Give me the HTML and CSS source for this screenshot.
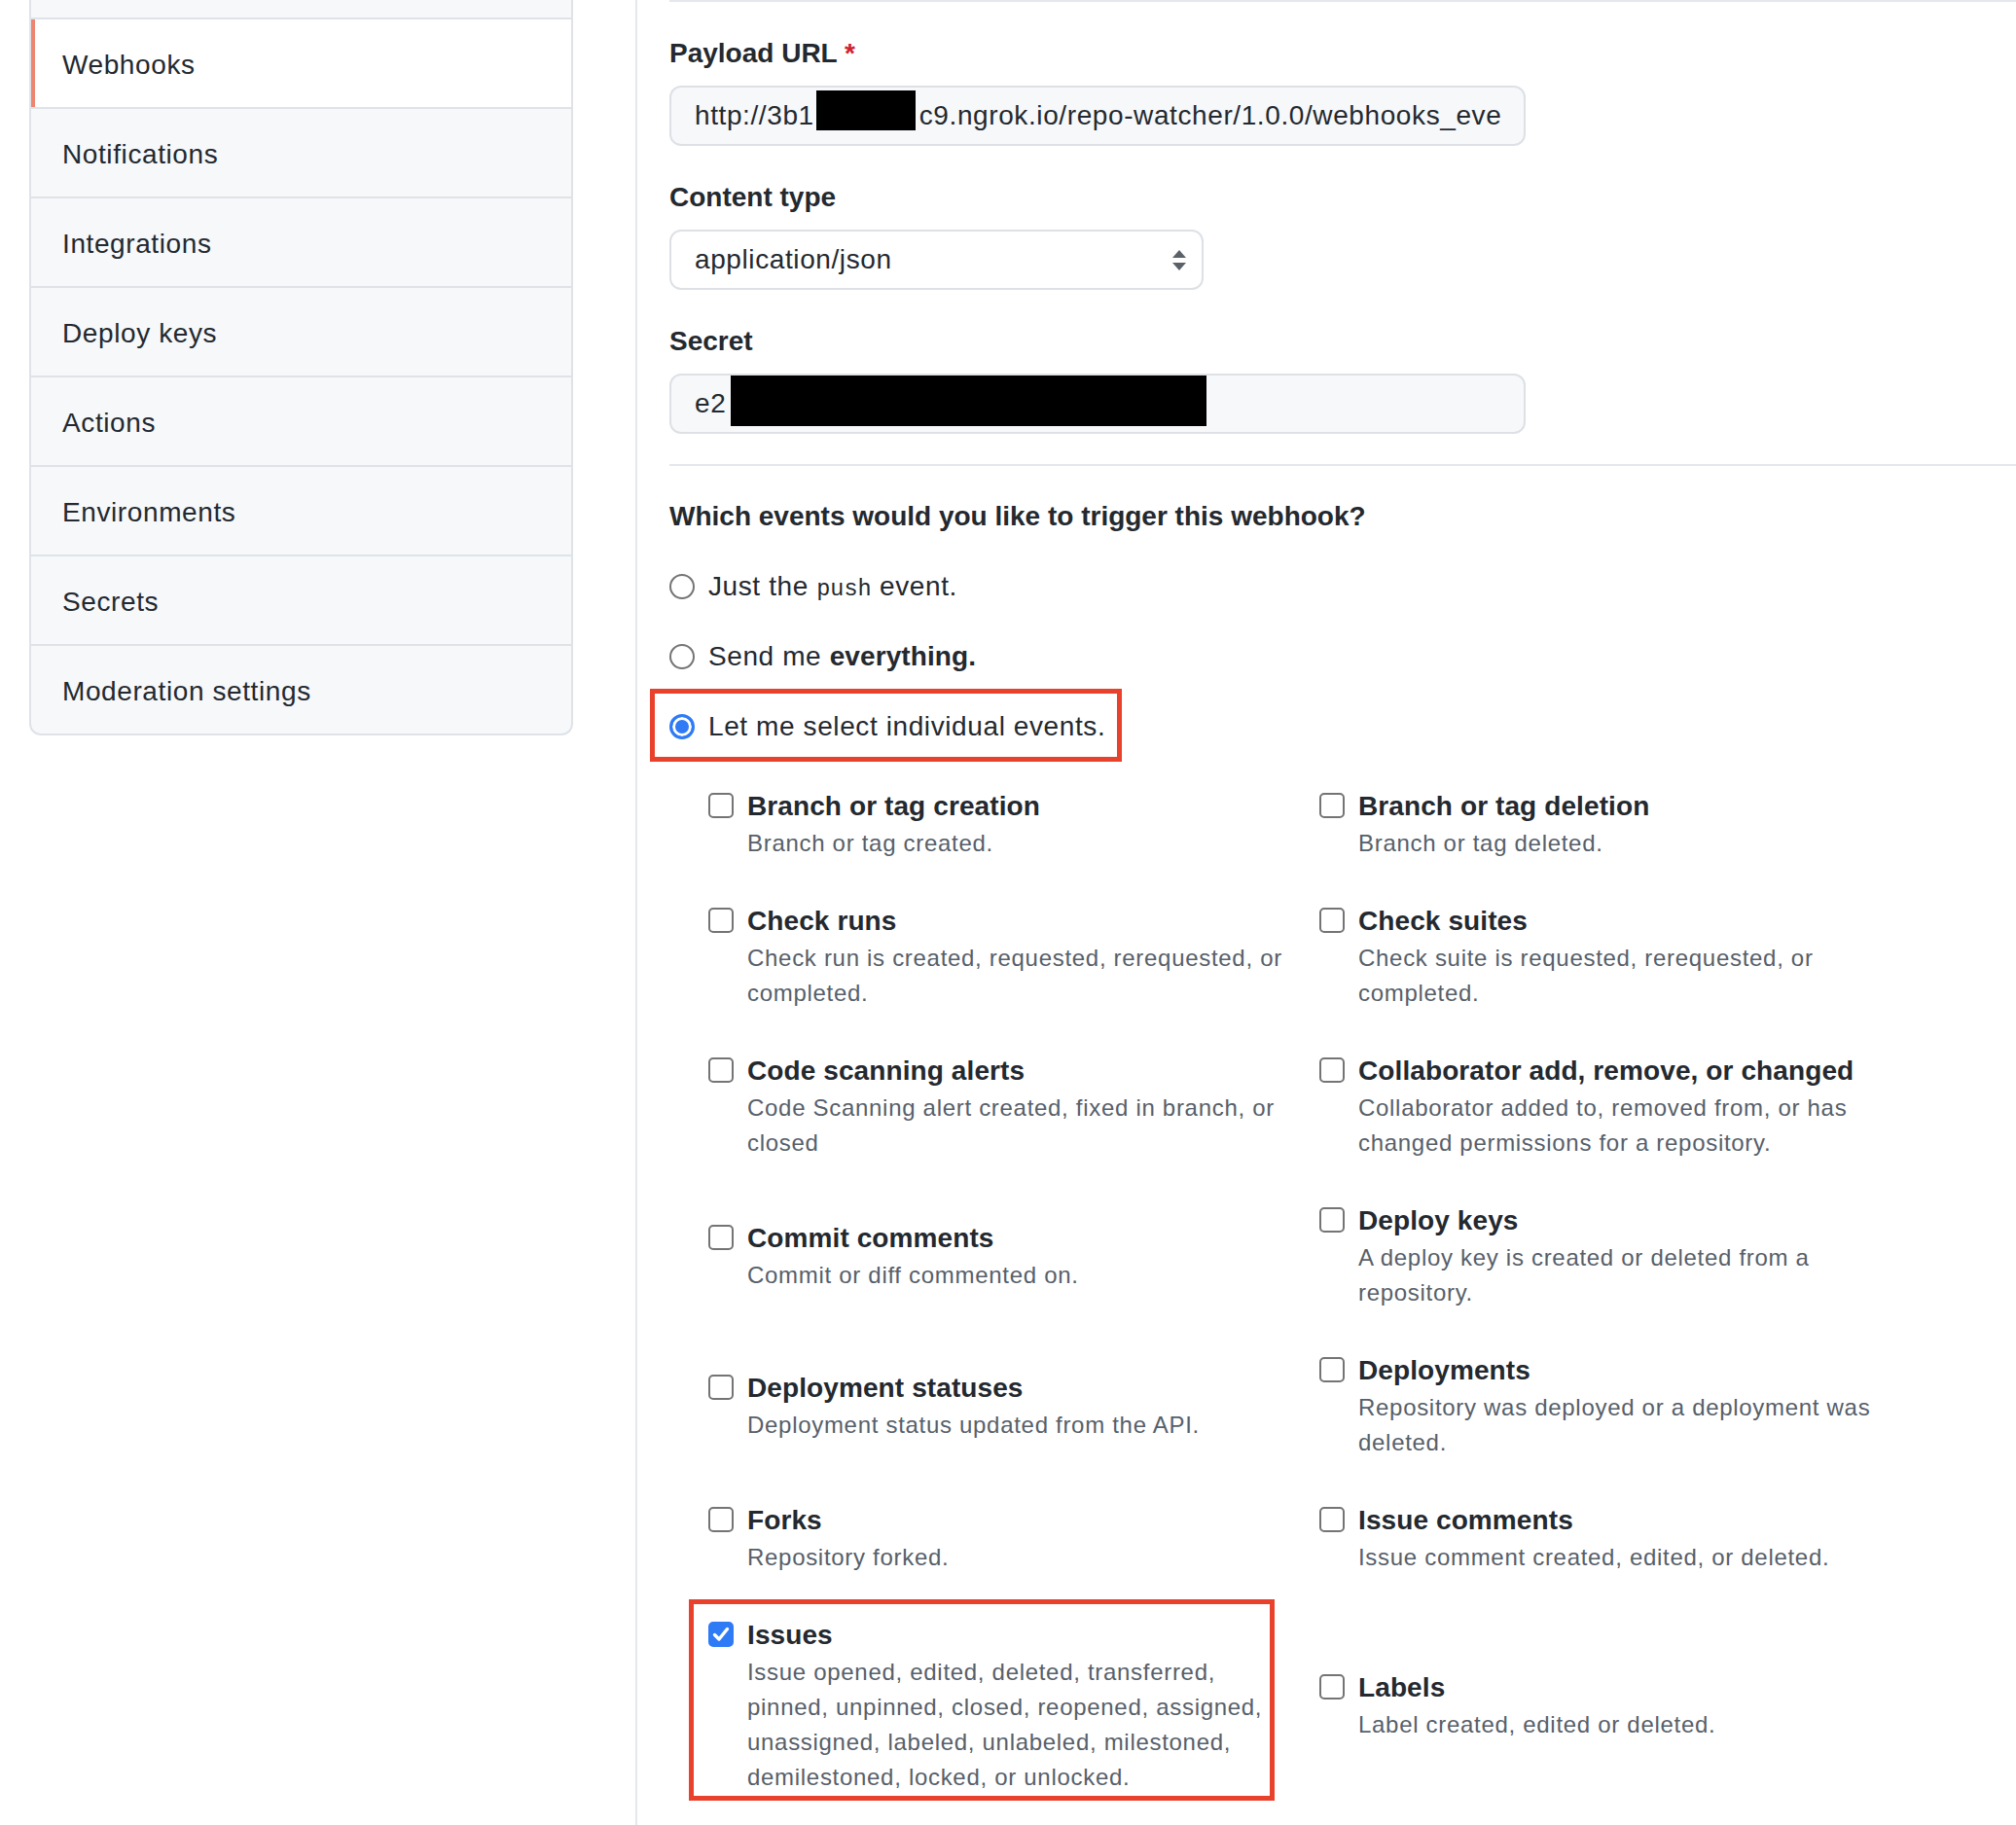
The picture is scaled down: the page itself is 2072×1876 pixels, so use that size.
FILE: index.html
```html
<!DOCTYPE html>
<html lang="en">
<head>
<meta charset="utf-8">
<title>Webhooks · Settings</title>
<link rel="stylesheet" href="styles.css">
</head>
<body>
<div class="page">
  <aside class="sidebar">
    <nav class="menu">
      <div class="menu-stub"></div>
      <a class="menu-item active" href="#">Webhooks</a>
      <a class="menu-item" href="#">Notifications</a>
      <a class="menu-item" href="#">Integrations</a>
      <a class="menu-item" href="#">Deploy keys</a>
      <a class="menu-item" href="#">Actions</a>
      <a class="menu-item" href="#">Environments</a>
      <a class="menu-item" href="#">Secrets</a>
      <a class="menu-item" href="#">Moderation settings</a>
    </nav>
  </aside>

  <main class="main">
    <div class="top-rule"></div>

    <div class="form-group">
      <label class="form-label">Payload URL <span class="req">*</span></label>
      <div class="input input-muted"><div class="input-text"><span>http://3b1</span><span class="redact redact-url"></span><span>c9.ngrok.io/repo-watcher/1.0.0/webhooks_events</span></div></div>
    </div>

    <div class="form-group">
      <label class="form-label">Content type</label>
      <div class="input select">
        <span>application/json</span>
        <svg class="select-arrows" width="14" height="21" viewBox="0 0 14 21" aria-hidden="true">
          <polygon points="0,8 7,0 14,8" fill="#5b6169"/>
          <polygon points="0,13 14,13 7,21" fill="#5b6169"/>
        </svg>
      </div>
    </div>

    <div class="form-group">
      <label class="form-label">Secret</label>
      <div class="input input-muted"><div class="input-text"><span>e2</span><span class="redact redact-secret"></span></div></div>
    </div>

    <div class="divider"></div>

    <h3 class="events-title">Which events would you like to trigger this webhook?</h3>

    <div class="radio-list">
      <label class="radio-row"><span class="radio"></span><span class="radio-text">Just the <code>push</code> event.</span></label>
      <label class="radio-row"><span class="radio"></span><span class="radio-text">Send me <strong>everything.</strong></span></label>
      <label class="radio-row"><span class="radio checked"></span><span class="radio-text">Let me select individual events.</span><span class="annot"></span></label>
    </div>

    <div class="event-grid">
      <div class="hook-event"><span class="cb"></span><div class="hook-text"><div class="hook-name">Branch or tag creation</div><div class="hook-desc">Branch or tag created.</div></div></div>
      <div class="hook-event"><span class="cb"></span><div class="hook-text"><div class="hook-name">Branch or tag deletion</div><div class="hook-desc">Branch or tag deleted.</div></div></div>

      <div class="hook-event"><span class="cb"></span><div class="hook-text"><div class="hook-name">Check runs</div><div class="hook-desc">Check run is created, requested, rerequested, or completed.</div></div></div>
      <div class="hook-event"><span class="cb"></span><div class="hook-text"><div class="hook-name">Check suites</div><div class="hook-desc">Check suite is requested, rerequested, or completed.</div></div></div>

      <div class="hook-event"><span class="cb"></span><div class="hook-text"><div class="hook-name">Code scanning alerts</div><div class="hook-desc">Code Scanning alert created, fixed in branch, or closed</div></div></div>
      <div class="hook-event"><span class="cb"></span><div class="hook-text"><div class="hook-name">Collaborator add, remove, or changed</div><div class="hook-desc">Collaborator added to, removed from, or has changed permissions for a repository.</div></div></div>

      <div class="hook-event"><span class="cb"></span><div class="hook-text"><div class="hook-name">Commit comments</div><div class="hook-desc">Commit or diff commented on.</div></div></div>
      <div class="hook-event"><span class="cb"></span><div class="hook-text"><div class="hook-name">Deploy keys</div><div class="hook-desc">A deploy key is created or deleted from a repository.</div></div></div>

      <div class="hook-event"><span class="cb"></span><div class="hook-text"><div class="hook-name">Deployment statuses</div><div class="hook-desc">Deployment status updated from the API.</div></div></div>
      <div class="hook-event"><span class="cb"></span><div class="hook-text"><div class="hook-name">Deployments</div><div class="hook-desc">Repository was deployed or a deployment was deleted.</div></div></div>

      <div class="hook-event"><span class="cb"></span><div class="hook-text"><div class="hook-name">Forks</div><div class="hook-desc">Repository forked.</div></div></div>
      <div class="hook-event"><span class="cb"></span><div class="hook-text"><div class="hook-name">Issue comments</div><div class="hook-desc">Issue comment created, edited, or deleted.</div></div></div>

      <div class="hook-event"><span class="cb checked"><svg width="18" height="16" viewBox="0 0 18 16" aria-hidden="true"><polyline points="2.5,8.5 7,13 15.5,2.5" fill="none" stroke="#fff" stroke-width="3.4" stroke-linecap="round" stroke-linejoin="round"/></svg></span><div class="hook-text"><div class="hook-name">Issues</div><div class="hook-desc">Issue opened, edited, deleted, transferred, pinned, unpinned, closed, reopened, assigned, unassigned, labeled, unlabeled, milestoned, demilestoned, locked, or unlocked.</div></div><span class="annot annot-issues"></span></div>
      <div class="hook-event"><span class="cb"></span><div class="hook-text"><div class="hook-name">Labels</div><div class="hook-desc">Label created, edited or deleted.</div></div></div>
    </div>
  </main>
</div>
</body>
</html>
```

FILE: styles.css
```css
* {
  box-sizing: border-box;
}

html,
body {
  margin: 0;
  background: #ffffff;
}

body {
  font-family: "Liberation Sans", Arial, sans-serif;
  color: #24292f;
}

.page {
  display: flex;
  min-height: 1876px;
}

/* ---------- Sidebar ---------- */
.sidebar {
  margin-left: 30px;
  width: 559px;
  flex-shrink: 0;
  align-self: flex-start;
}

.menu {
  background: #f6f8fa;
  border: 2px solid #dfe3e8;
  border-top: 0;
  border-radius: 0 0 12px 12px;
  overflow: hidden;
}

.menu-stub {
  height: 20px;
  border-bottom: 2px solid #dfe3e8;
}

.menu-item {
  position: relative;
  display: block;
  padding: 27px 32px 23px;
  font-size: 28px;
  line-height: 40px;
  letter-spacing: 0.6px;
  color: #24292f;
  text-decoration: none;
  border-bottom: 2px solid #dfe3e8;
}

.menu-item:last-child {
  border-bottom: 0;
}

.menu-item.active {
  background: #ffffff;
}

.menu-item.active::before {
  content: "";
  position: absolute;
  left: 0;
  top: 0;
  bottom: 0;
  width: 4px;
  background: #ec8670;
}

/* ---------- Main ---------- */
.main {
  flex: 1;
  min-width: 0;
  margin-left: 64px;
  padding-left: 33px;
  border-left: 2px solid #e4e7eb;
}

.top-rule {
  border-top: 2px solid #e4e7eb;
}

.form-group {
  margin-top: 33px;
}

.top-rule + .form-group {
  margin-top: 33px;
}

.form-label {
  display: block;
  margin-bottom: 13px;
  font-size: 28px;
  font-weight: bold;
  line-height: 40px;
}

.req {
  color: #cf222e;
}

.input {
  width: 880px;
  height: 62px;
  padding: 0 24px;
  border: 2px solid #dde1e6;
  border-radius: 12px;
  font-size: 28px;
  line-height: 58px;
  letter-spacing: 0.6px;
  color: #24292f;
}

.input-text {
  white-space: nowrap;
  overflow: hidden;
}

.input-muted {
  background: #f6f8fa;
}

.select {
  width: 549px;
  display: flex;
  align-items: center;
  justify-content: space-between;
  padding: 0 16px 0 24px;
  background: #ffffff;
}

.select-arrows {
  flex-shrink: 0;
}

.redact {
  display: inline-block;
  background: #000000;
}

.redact-url {
  width: 102px;
  height: 41px;
  margin: 0 4px 0 2px;
  vertical-align: -6px;
}

.redact-secret {
  width: 489px;
  height: 52px;
  margin-left: 5px;
  vertical-align: -14px;
}

.divider {
  margin-top: 31px;
  border-top: 2px solid #e4e7eb;
}

.events-title {
  margin: 32px 0 0;
  font-size: 28px;
  font-weight: bold;
  line-height: 40px;
}

/* ---------- Radios ---------- */
.radio-list {
  display: flex;
  flex-direction: column;
  align-items: flex-start;
  gap: 32px;
  margin-top: 32px;
}

.radio-row {
  position: relative;
  display: inline-flex;
  align-items: center;
  height: 40px;
  font-size: 28px;
  line-height: 40px;
  letter-spacing: 0.6px;
}

.radio {
  width: 26px;
  height: 26px;
  margin-right: 14px;
  flex-shrink: 0;
  border: 2px solid #747474;
  border-radius: 50%;
  background: #ffffff;
}

.radio.checked {
  border: 3px solid #2f7bf6;
  background: #2f7bf6;
  box-shadow: inset 0 0 0 3px #ffffff;
}

.radio-text code {
  font-family: "Liberation Mono", "DejaVu Sans Mono", monospace;
  font-size: 23.5px;
  line-height: 1;
  letter-spacing: 0;
}

.radio-text strong {
  font-weight: bold;
  letter-spacing: 0.1px;
}

/* annotation frames drawn over the screenshot */
.annot {
  position: absolute;
  border: 5px solid #e8412c;
  pointer-events: none;
}

.radio-row .annot {
  left: -20px;
  right: -17px;
  top: -19px;
  bottom: -16px;
}

.annot-issues {
  left: -20px;
  right: 46px;
  top: -17px;
  bottom: -6px;
}

/* ---------- Event grid ---------- */
.event-grid {
  display: grid;
  grid-template-columns: 628px 628px;
  align-items: center;
  row-gap: 42px;
  margin: 42px 0 40px 40px;
}

.hook-event {
  position: relative;
  display: flex;
  align-items: flex-start;
  padding-right: 38px;
}

.cb {
  width: 26px;
  height: 26px;
  margin: 6px 14px 0 0;
  flex-shrink: 0;
  border: 2px solid #747474;
  border-radius: 5px;
  background: #ffffff;
}

.cb.checked {
  display: flex;
  align-items: center;
  justify-content: center;
  border-color: #2f7bf6;
  background: #2f7bf6;
}

.hook-text {
  max-width: 550px;
}

.hook-name {
  font-size: 28px;
  font-weight: bold;
  line-height: 40px;
  letter-spacing: 0.1px;
  color: #24292f;
}

.hook-desc {
  font-size: 24px;
  line-height: 36px;
  letter-spacing: 0.7px;
  color: #57606a;
}
```
